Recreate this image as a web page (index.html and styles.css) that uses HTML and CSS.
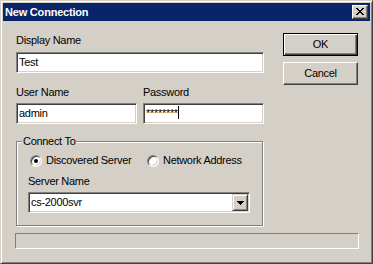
FILE: index.html
```html
<!DOCTYPE html>
<html lang="en">
<head>
    <meta charset="UTF-8">
    <title>New Connection</title>
    <link rel="stylesheet" href="styles.css">
</head>
<body>
    <div class="window">
        <div class="titlebar">
            <span class="title">New Connection</span>
            <span class="close-btn">
                <svg width="8" height="7" viewBox="0 0 8 7" shape-rendering="crispEdges">
                    <path fill="#000" d="M0 0h2v1h-2z M6 0h2v1h-2z M1 1h2v1h-2z M5 1h2v1h-2z M2 2h4v1h-4z M3 3h2v1h-2z M2 4h4v1h-4z M1 5h2v1h-2z M5 5h2v1h-2z M0 6h2v1h-2z M6 6h2v1h-2z"/>
                </svg>
            </span>
        </div>

        <div class="content">
            <div class="main">
                <div class="left">
                    <div class="label">Display Name</div>
                    <div class="field field-first">Test</div>

                    <div class="pair">
                        <div class="col">
                            <div class="label">User Name</div>
                            <div class="field">admin</div>
                        </div>
                        <div class="col">
                            <div class="label">Password</div>
                            <div class="field"><span class="stars">********</span><span class="caret"></span></div>
                        </div>
                    </div>

                    <div class="group">
                        <div class="group-title">Connect To</div>
                        <div class="options">
                            <div class="option option-first">
                                <span class="radio on"></span>
                                <span>Discovered Server</span>
                            </div>
                            <div class="option">
                                <span class="radio"></span>
                                <span>Network Address</span>
                            </div>
                        </div>
                        <div class="label label-server">Server Name</div>
                        <div class="combo">
                            <span class="combo-text">cs-2000svr</span>
                            <span class="drop-btn">
                                <svg width="7" height="4" viewBox="0 0 7 4" shape-rendering="crispEdges">
                                    <path fill="#000" d="M0 0h7v1h-7z M1 1h5v1h-5z M2 2h3v1h-3z M3 3h1v1h-1z"/>
                                </svg>
                            </span>
                        </div>
                    </div>
                </div>

                <div class="right">
                    <div class="btn btn-default">OK</div>
                    <div class="btn">Cancel</div>
                </div>
            </div>

            <div class="status"></div>
        </div>
    </div>
</body>
</html>
```

FILE: styles.css
```css
body {
    margin: 0;
    background-color: #d4d0c8;
    font-family: "Liberation Sans", Arial, sans-serif;
    font-size: 11px;
    letter-spacing: -0.3px;
    color: #000;
}
.window {
    width: 373px;
    height: 264px;
    box-sizing: border-box;
    padding: 2px;
    background: #d4d0c8;
    border: 1px solid;
    border-color: #d4d0c8 #404040 #404040 #d4d0c8;
    box-shadow: inset 1px 1px #fff, inset -1px -1px #808080;
}
.titlebar {
    height: 18px;
    background: #0a246a;
    display: flex;
    align-items: center;
    justify-content: space-between;
    padding: 0 2px;
}
.title {
    color: #fff;
    font-weight: bold;
    letter-spacing: -0.2px;
    line-height: 18px;
}
.close-btn {
    width: 16px;
    height: 14px;
    box-sizing: border-box;
    background: #d4d0c8;
    border: 1px solid;
    border-color: #fff #404040 #404040 #fff;
    box-shadow: inset -1px -1px #808080;
    display: flex;
    align-items: center;
    justify-content: center;
    padding: 0 1px 1px 0;
}
.close-btn svg, .drop-btn svg {
    display: block;
}
.content {
    padding: 12px 0 0 12px;
}
.main {
    display: flex;
}
.left {
    width: 248px;
    margin-left: 1px;
    padding-top: 1px;
}
.right {
    margin-left: 19px;
    display: flex;
    flex-direction: column;
    gap: 6px;
}
.label {
    line-height: 13px;
    height: 13px;
}
.field {
    height: 21px;
    box-sizing: border-box;
    margin-top: 4px;
    padding-left: 2px;
    line-height: 19px;
    background: #fff;
    border: 1px solid;
    border-color: #808080 #fff #fff #808080;
    box-shadow: inset 1px 1px #404040, inset -1px -1px #d4d0c8;
    white-space: nowrap;
    overflow: hidden;
}
.field-first {
    margin-top: 5px;
}
.stars {
    vertical-align: top;
}
.caret {
    display: inline-block;
    width: 1px;
    height: 13px;
    background: #000;
    vertical-align: top;
    margin-top: 2px;
}
.pair {
    display: flex;
    gap: 6px;
    margin-top: 13px;
}
.pair .col {
    width: 121px;
}
.group {
    width: 247px;
    box-sizing: border-box;
    margin-top: 17px;
    padding: 0 11px 12px;
    border: 1px solid #808080;
    box-shadow: inset 1px 1px #fff, 1px 1px #fff;
}
.group-title {
    width: fit-content;
    line-height: 13px;
    margin: -7px 0 0 -6px;
    padding: 0 1px;
    background: #d4d0c8;
}
.options {
    display: flex;
    align-items: center;
    height: 13px;
    margin-top: 6px;
}
.option {
    display: flex;
    align-items: center;
    gap: 4px;
    line-height: 13px;
    white-space: nowrap;
}
.option-first {
    width: 117px;
    margin-left: 2px;
}
.radio {
    position: relative;
    width: 12px;
    height: 12px;
    box-sizing: border-box;
    border-radius: 50%;
    background: #fff;
    border: 1px solid;
    border-color: #808080 #fff #fff #808080;
    box-shadow: inset 1px 1px #404040, inset -1px -1px #d4d0c8;
    flex: none;
}
.radio.on::after {
    content: "";
    position: absolute;
    left: 3px;
    top: 3px;
    width: 4px;
    height: 4px;
    border-radius: 50%;
    background: #000;
}
.label-server {
    margin-top: 8px;
}
.combo {
    width: 222px;
    height: 21px;
    box-sizing: border-box;
    margin-top: 4px;
    padding: 1px;
    background: #fff;
    border: 1px solid;
    border-color: #808080 #fff #fff #808080;
    box-shadow: inset 1px 1px #404040, inset -1px -1px #d4d0c8;
    display: flex;
    justify-content: space-between;
}
.combo-text {
    line-height: 17px;
    padding-left: 1px;
}
.drop-btn {
    width: 16px;
    height: 17px;
    box-sizing: border-box;
    background: #d4d0c8;
    border: 1px solid;
    border-color: #d4d0c8 #404040 #404040 #d4d0c8;
    box-shadow: inset 1px 1px #fff, inset -1px -1px #808080;
    display: flex;
    align-items: center;
    justify-content: center;
}
.btn {
    width: 75px;
    height: 23px;
    box-sizing: border-box;
    line-height: 21px;
    text-align: center;
    background: #d4d0c8;
    border: 1px solid;
    border-color: #fff #404040 #404040 #fff;
    box-shadow: inset -1px -1px #808080;
}
.btn-default {
    border-color: #000;
    box-shadow: inset 1px 1px #fff, inset -1px -1px #404040, inset -2px -2px #808080;
}
.status {
    width: 344px;
    height: 16px;
    box-sizing: border-box;
    margin-top: 7px;
    border: 1px solid;
    border-color: #808080 #fff #fff #808080;
}
```
